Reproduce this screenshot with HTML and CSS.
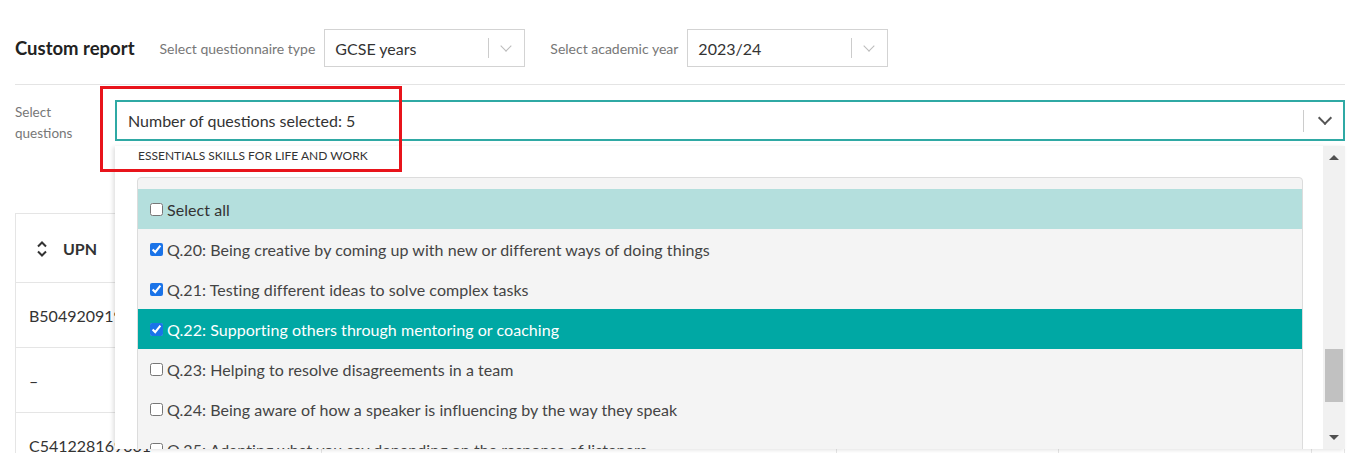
FILE: index.html
```html
<!DOCTYPE html>
<html lang="en">
<head>
    <meta charset="UTF-8">
    <title>Custom report</title>
    <link rel="stylesheet" href="styles.css">
</head>
<body>
    <div class="page">
        <div class="toolbar">
            <h1>Custom report</h1>
            <label class="field-label">Select questionnaire type</label>
            <div class="select">
                <span class="select-value">GCSE years</span>
                <span class="select-sep"></span>
                <span class="chevron"></span>
            </div>
            <label class="field-label">Select academic year</label>
            <div class="select">
                <span class="select-value">2023/24</span>
                <span class="select-sep"></span>
                <span class="chevron"></span>
            </div>
        </div>

        <div class="question-row">
            <div class="question-label">Select<br>questions</div>
            <div class="select select-wide">
                <span class="select-value">Number of questions selected: 5</span>
                <span class="select-sep"></span>
                <span class="chevron dark"></span>
            </div>

            <div class="dropdown">
                <div class="dropdown-scroll">
                    <div class="group-title">ESSENTIALS SKILLS FOR LIFE AND WORK</div>
                    <div class="options">
                        <div class="option select-all"><input type="checkbox"> Select all</div>
                        <div class="option"><input type="checkbox" checked> Q.20: Being creative by coming up with new or different ways of doing things</div>
                        <div class="option"><input type="checkbox" checked> Q.21: Testing different ideas to solve complex tasks</div>
                        <div class="option active"><input type="checkbox" checked> Q.22: Supporting others through mentoring or coaching</div>
                        <div class="option"><input type="checkbox"> Q.23: Helping to resolve disagreements in a team</div>
                        <div class="option"><input type="checkbox"> Q.24: Being aware of how a speaker is influencing by the way they speak</div>
                        <div class="option"><input type="checkbox"> Q.25: Adapting what you say depending on the response of listeners</div>
                    </div>
                </div>
                <div class="scrollbar">
                    <span class="arrow up"></span>
                    <span class="thumb"></span>
                    <span class="arrow down"></span>
                </div>
            </div>

            <div class="highlight"></div>
        </div>

        <div class="table-wrap">
            <table class="report">
                <thead>
                    <tr>
                        <th class="col-upn">
                            <svg class="sort" width="12" height="18" viewBox="0 0 12 18">
                                <path d="M2 6.5 L6 2.5 L10 6.5" fill="none" stroke="#333" stroke-width="2"/>
                                <path d="M2 11.5 L6 15.5 L10 11.5" fill="none" stroke="#333" stroke-width="2"/>
                            </svg>
                            UPN
                        </th>
                        <th class="col-a"></th>
                        <th class="col-b"></th>
                        <th class="col-c"></th>
                        <th></th>
                    </tr>
                </thead>
                <tbody>
                    <tr><td>B504920919001</td><td></td><td></td><td></td><td></td></tr>
                    <tr><td>&ndash;</td><td></td><td></td><td></td><td></td></tr>
                    <tr><td>C541228169001</td><td></td><td></td><td></td><td></td></tr>
                </tbody>
            </table>
        </div>
    </div>
</body>
</html>
```

FILE: styles.css
```css
body {
    margin: 0;
    font-family: Lato, "Open Sans", sans-serif;
    color: #333;
    background: #fff;
    overflow: hidden;
}

.page {
    padding: 29px 9px 0 15px;
}

.toolbar {
    display: flex;
    align-items: center;
    height: 38px;
    padding-bottom: 17px;
    border-bottom: 1px solid #e4e4e4;
}

h1 {
    font-size: 18.5px;
    font-weight: 700;
    color: #222;
    margin: 0 25px 0 0;
}

.field-label {
    font-size: 14px;
    color: #777;
    margin-right: 9px;
}

.select {
    display: flex;
    align-items: center;
    box-sizing: border-box;
    width: 201px;
    height: 38px;
    border: 1px solid #d3d3d3;
    background: #fff;
    margin-right: 25px;
}

.select-value {
    flex: 1;
    font-size: 16px;
    color: #333;
    padding-left: 10px;
}

.select-sep {
    width: 1px;
    height: 20px;
    background: #ccc;
}

.chevron {
    width: 7px;
    height: 7px;
    border-right: 1.5px solid #bbb;
    border-bottom: 1.5px solid #bbb;
    transform: rotate(45deg);
    margin: -5px 14px 0 13px;
}

.chevron.dark {
    border-color: #555;
    width: 8px;
    height: 8px;
    border-width: 2px;
}

/* question picker */
.question-row {
    position: relative;
    display: flex;
    margin-top: 15px;
}

.question-label {
    width: 100px;
    font-size: 13.5px;
    line-height: 21px;
    color: #777;
    padding-top: 2px;
}

.select-wide {
    flex: 1;
    width: auto;
    height: 41px;
    border: 2px solid #2fa9a4;
    margin-right: 0;
}

.select-wide .select-value {
    padding-left: 11px;
}

.select-wide .select-sep {
    height: 22px;
}

.select-wide .chevron {
    margin: -6px 13px 0 16px;
}

.dropdown {
    position: absolute;
    top: 46px;
    left: 100px;
    right: 0;
    height: 303px;
    display: flex;
    background: #fff;
    box-shadow: -2px 1px 4px rgba(0, 0, 0, 0.12);
    z-index: 5;
    overflow: hidden;
}

.dropdown-scroll {
    flex: 1;
    padding: 0 20px 0 22px;
}

.group-title {
    font-size: 12px;
    color: #333;
    height: 31px;
    line-height: 20px;
    padding-left: 1px;
}

.options {
    border: 1px solid #dcdcdc;
    border-radius: 4px;
    background: #f4f4f4;
    padding-top: 11px;
}

.option {
    display: flex;
    align-items: center;
    height: 40px;
    font-size: 16px;
    letter-spacing: 0.05px;
    color: #444;
    padding-left: 12px;
    white-space: nowrap;
}

.option input {
    width: 13px;
    height: 13px;
    margin: 0 4px 0 0;
    accent-color: #1a73e8;
}

.select-all {
    background: #b4dfdd;
    color: #333;
}

.active {
    background: #00a8a4;
    color: #fff;
}

.scrollbar {
    width: 22px;
    background: #f1f1f1;
    position: relative;
}

.arrow {
    position: absolute;
    left: 6px;
    width: 0;
    height: 0;
    border-left: 5px solid transparent;
    border-right: 5px solid transparent;
}

.arrow.up {
    top: 9px;
    border-bottom: 5px solid #505050;
}

.arrow.down {
    bottom: 9px;
    border-top: 5px solid #505050;
}

.thumb {
    position: absolute;
    top: 203px;
    left: 2px;
    width: 18px;
    height: 53px;
    background: #c1c1c1;
}

.highlight {
    position: absolute;
    top: -14px;
    left: 85px;
    width: 296px;
    height: 80px;
    border: 3px solid #e8141b;
    z-index: 6;
}

/* report table behind the dropdown */
.table-wrap {
    margin-top: 69px;
    height: 240px;
    overflow: hidden;
}

.report {
    width: 100%;
    table-layout: fixed;
    border-collapse: collapse;
    border: 1px solid #e5e5e5;
    font-size: 16px;
    color: #333;
}

.report th {
    height: 68px;
    padding: 0 0 0 20px;
    text-align: left;
    font-weight: 700;
    border-bottom: 1px solid #e5e5e5;
}

.report td {
    height: 64px;
    padding: 0 0 0 13px;
    border-bottom: 1px solid #e5e5e5;
    border-right: 1px solid #e5e5e5;
    white-space: nowrap;
    overflow: hidden;
}

.col-upn { width: 285px; }
.col-a { width: 495px; }
.col-b { width: 202px; }
.col-c { width: 233px; }

.sort {
    vertical-align: -3px;
    margin-right: 11px;
}
```
